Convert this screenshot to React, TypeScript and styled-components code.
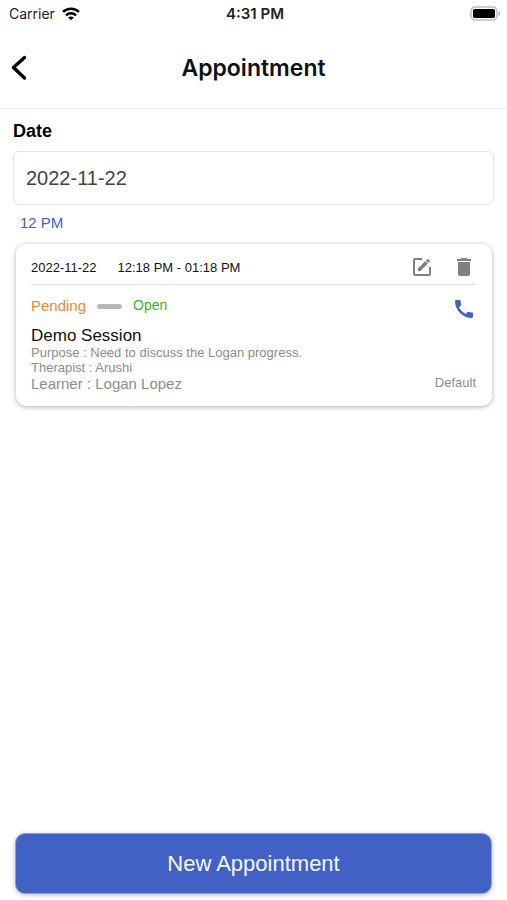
import React, { useState } from "react";
import styled, { createGlobalStyle } from "styled-components";

const BLUE = "#4261c4";
const GREY = "#8c8c8c";
const SYSTEM = `Inter, "Liberation Sans", sans-serif`;

const GlobalStyle = createGlobalStyle`
  *, *::before, *::after { box-sizing: border-box; }
  body {
    margin: 0;
    background: #fff;
    color: #111;
    font-family: "Liberation Sans", Arial, sans-serif;
  }
  button, input { font: inherit; color: inherit; }
  h1, h2, p { margin: 0; }
  svg { display: block; }
`;

const Screen = styled.div`
  display: flex;
  flex-direction: column;
  min-height: 100vh;
`;

const StatusBar = styled.div`
  display: grid;
  grid-template-columns: 1fr auto 1fr;
  align-items: center;
  height: 27px;
  padding: 0 6px 0 9px;
  font-family: ${SYSTEM};
  font-size: 14px;
  color: #222;
`;

const Carrier = styled.div`
  display: flex;
  align-items: center;
  gap: 7px;
`;

const Clock = styled.time`
  font-size: 15px;
  font-weight: 600;
`;

const Battery = styled.div`
  justify-self: end;
`;

const Header = styled.header`
  display: grid;
  grid-template-columns: 48px 1fr 48px;
  align-items: center;
  height: 82px;
  border-bottom: 1px solid #efefef;
`;

const IconButton = styled.button`
  display: flex;
  padding: 0;
  border: 0;
  background: none;
  cursor: pointer;
`;

const BackButton = styled(IconButton)`
  padding-left: 9px;
  color: #000;
`;

const Title = styled.h1`
  font-family: ${SYSTEM};
  font-size: 23px;
  line-height: 32px;
  font-weight: 600;
  text-align: center;
`;

const Main = styled.main`
  flex: 1;
  padding: 12px 13px 0;
`;

const FieldLabel = styled.label`
  display: block;
  font-size: 18px;
  line-height: 20px;
  font-weight: 700;
  color: #000;
`;

const DateInput = styled.input`
  display: block;
  width: 100%;
  height: 54px;
  margin-top: 10px;
  padding: 0 12px;
  border: 1px solid #e3e3e3;
  border-radius: 6px;
  background: #fff;
  font-size: 20px;
  color: #444;
`;

const SlotTime = styled.h2`
  margin: 9px 7px 13px;
  font-size: 15px;
  line-height: 17px;
  font-weight: 400;
  color: ${BLUE};
`;

const Card = styled.article`
  margin: 0 2px 0 3px;
  padding: 0 16px 14px 15px;
  border-radius: 10px;
  background: #fff;
  box-shadow: 0 1px 5px rgba(0, 0, 0, 0.32);
`;

const CardTop = styled.div`
  display: flex;
  align-items: center;
  gap: 21px;
  height: 41px;
  padding-top: 6px;
  border-bottom: 1px solid #e0e0e0;
  font-size: 13px;
`;

const Actions = styled.div`
  display: flex;
  align-items: center;
  gap: 18px;
  margin-left: auto;
  color: #808080;
`;

const StatusRow = styled.div`
  display: flex;
  align-items: center;
  gap: 11px;
  height: 42px;
  padding-bottom: 2px;
`;

const Status = styled.span<{ $color: string; $small?: boolean }>`
  color: ${(p) => p.$color};
  font-size: ${(p) => (p.$small ? 14 : 15)}px;
`;

const Dash = styled.span`
  width: 25px;
  height: 5px;
  margin-top: 2px;
  border-radius: 3px;
  background: #b8b8b8;
`;

const CallButton = styled(IconButton)`
  margin-left: auto;
  padding-top: 8px;
  color: ${BLUE};
`;

const SessionName = styled.h2`
  font-size: 17px;
  line-height: 18px;
  font-weight: 400;
`;

const Detail = styled.p<{ $large?: boolean }>`
  font-size: ${(p) => (p.$large ? 15 : 13)}px;
  line-height: ${(p) => (p.$large ? 17 : 15)}px;
  color: ${GREY};
`;

const DetailFoot = styled.div`
  display: flex;
  justify-content: space-between;
`;

const Footer = styled.footer`
  padding: 16px 15px 6px;
`;

const PrimaryButton = styled.button`
  display: block;
  width: 100%;
  height: 61px;
  border: 1px solid #8c9edb;
  border-radius: 10px;
  background: ${BLUE};
  box-shadow: 0 1px 5px rgba(0, 0, 0, 0.25);
  font-size: 22px;
  color: #f5f7ff;
  cursor: pointer;
`;

const WifiIcon = () => (
  <svg width="18" height="14" viewBox="0 0 18 14" aria-hidden="true">
    <g fill="none" stroke="#000" strokeWidth="2.5">
      <path d="M1 4.9C5.4 0.6 12.6 0.6 17 4.9" />
      <path d="M4 8.3c2.8-2.8 7.2-2.8 10 0" />
    </g>
    <path d="M9 13.3 6.1 10.5c1.7-1.5 4.1-1.5 5.8 0Z" fill="#000" />
  </svg>
);

const BatteryIcon = () => (
  <svg width="31" height="15" viewBox="0 0 31 15" aria-hidden="true">
    <rect x="1" y="1" width="26" height="13" rx="4" fill="#fff" stroke="#bdbdbd" strokeWidth="1.5" />
    <rect x="3" y="3" width="22" height="9" rx="1.5" fill="#000" />
    <path d="M28.6 5.2c2 .8 2 3.8 0 4.6Z" fill="#aaa" />
  </svg>
);

const BackIcon = () => (
  <svg width="20" height="28" viewBox="0 0 20 28" aria-hidden="true">
    <path d="M15.5 3.5 4.500 13.500l11 10.500" fill="none" stroke="currentColor" strokeWidth="3.4" strokeLinecap="round" strokeLinejoin="round" />
  </svg>
);

const EditIcon = () => (
  <svg width="24" height="24" viewBox="0 0 24 24" fill="currentColor" aria-hidden="true">
    <path d="M5 3C3.890 3 3 3.890 3 5V19A2 2 0 0 0 5 21H19A2 2 0 0 0 21 19V12H19V19H5V5H12V3H5M17.780 4C17.610 4 17.430 4.070 17.300 4.200L16.080 5.410L18.580 7.910L19.800 6.700C20.060 6.440 20.060 6 19.800 5.750L18.250 4.200C18.120 4.070 17.950 4 17.780 4M15.370 6.120L8 13.500V16H10.500L17.870 8.620L15.370 6.120Z" />
  </svg>
);

const TrashIcon = () => (
  <svg width="24" height="24" viewBox="0 0 24 24" fill="currentColor" aria-hidden="true">
    <path d="M6 19c0 1.100.9 2 2 2h8c1.100 0 2-.9 2-2V7H6v12zM19 4h-3.500l-1-1h-5l-1 1H5v2h14V4z" />
  </svg>
);

const PhoneIcon = () => (
  <svg width="24" height="24" viewBox="0 0 24 24" fill="currentColor" aria-hidden="true">
    <path d="M20.010 15.380c-1.230 0-2.420-.2-3.530-.56a.977.977 0 0 0-1.010.24l-1.570 1.970c-2.830-1.350-5.480-3.900-6.890-6.830l1.950-1.660c.27-.28.350-.67.240-1.020-.37-1.110-.56-2.300-.56-3.530 0-.54-.45-.99-.99-.99H4.190C3.650 3 3 3.240 3 3.990 3 13.280 10.730 21 20.010 21c.71 0 .99-.63.990-1.180v-3.450c0-.54-.45-.99-.99-.99z" />
  </svg>
);

export default function App() {
  const [date, setDate] = useState("2022-11-22");

  return (
    <Screen>
      <GlobalStyle />
      <StatusBar>
        <Carrier>
          Carrier
          <WifiIcon />
        </Carrier>
        <Clock>4:31 PM</Clock>
        <Battery>
          <BatteryIcon />
        </Battery>
      </StatusBar>
      <Header>
        <BackButton type="button" aria-label="Back">
          <BackIcon />
        </BackButton>
        <Title>Appointment</Title>
      </Header>
      <Main>
        <FieldLabel htmlFor="date">Date</FieldLabel>
        <DateInput id="date" type="text" value={date} onChange={(e) => setDate(e.target.value)} />
        <SlotTime>12 PM</SlotTime>
        <Card>
          <CardTop>
            <span>2022-11-22</span>
            <span>12:18 PM - 01:18 PM</span>
            <Actions>
              <IconButton type="button" aria-label="Edit appointment">
                <EditIcon />
              </IconButton>
              <IconButton type="button" aria-label="Delete appointment">
                <TrashIcon />
              </IconButton>
            </Actions>
          </CardTop>
          <StatusRow>
            <Status $color="#ef8632">Pending</Status>
            <Dash />
            <Status $color="#32b818" $small>
              Open
            </Status>
            <CallButton type="button" aria-label="Call">
              <PhoneIcon />
            </CallButton>
          </StatusRow>
          <SessionName>Demo Session</SessionName>
          <Detail>Purpose : Need to discuss the Logan progress.</Detail>
          <Detail>Therapist : Arushi</Detail>
          <DetailFoot>
            <Detail $large>Learner : Logan Lopez</Detail>
            <Detail>Default</Detail>
          </DetailFoot>
        </Card>
      </Main>
      <Footer>
        <PrimaryButton type="button">New Appointment</PrimaryButton>
      </Footer>
    </Screen>
  );
}
